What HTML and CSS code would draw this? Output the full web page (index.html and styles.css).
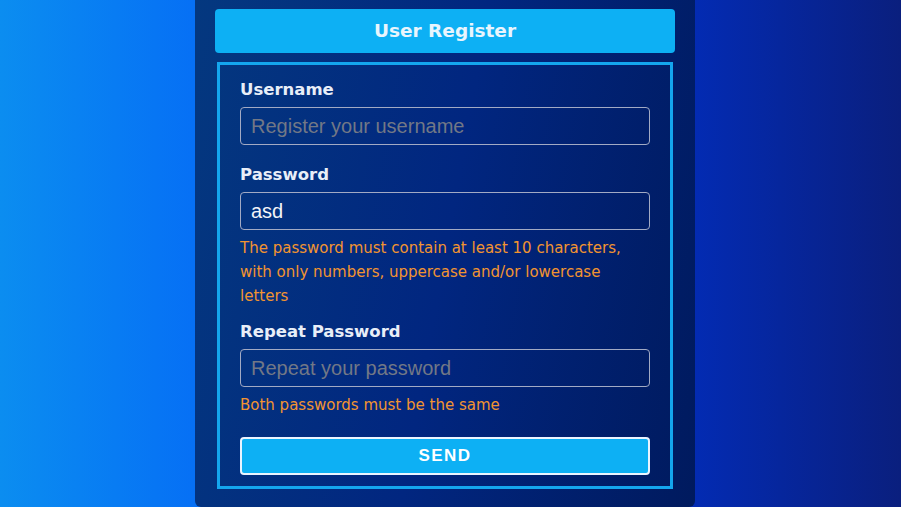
FILE: index.html
```html
<!DOCTYPE html>
<html>
<head>
<meta charset="utf-8">
<link rel="stylesheet" href="styles.css">
</head>
<body>
<main class="card">
  <h1 class="title">User Register</h1>
  <form class="form">
    <div class="field">
      <label class="label">Username</label>
      <input class="input" type="text" placeholder="Register your username">
    </div>
    <div class="field">
      <label class="label">Password</label>
      <input class="input" type="text" value="asd">
      <p class="error">The password must contain at least 10 characters, with only numbers, uppercase and/or lowercase letters</p>
    </div>
    <div class="field">
      <label class="label">Repeat Password</label>
      <input class="input" type="text" placeholder="Repeat your password">
      <p class="error">Both passwords must be the same</p>
    </div>
    <button class="send" type="button">SEND</button>
  </form>
</main>
</body>
</html>
```

FILE: styles.css
```css
html, body {
  margin: 0;
  height: 100%;
}
body {
  background: linear-gradient(to right, #0b8df0 0%, #0670f5 21.6%, #0436c2 72%, #032bb3 77%, #0a1f7e 100%);
  display: flex;
  justify-content: center;
  padding-right: 11px;
  box-sizing: border-box;
  overflow: hidden;
  font-family: "DejaVu Sans", sans-serif;
}
.card {
  width: 460px;
  height: 498px;
  padding: 9px 20px 0;
  background: linear-gradient(100deg, #04387f 0%, #012680 50%, #001a5e 100%);
  border-radius: 0 0 6px 6px;
}
.title {
  margin: 0;
  height: 44px;
  line-height: 44px;
  background: #0db0f4;
  border-radius: 4px;
  color: #e9f5fd;
  text-align: center;
  font-size: 18.5px;
  font-weight: bold;
}
.form {
  margin: 9px 2px 0;
  border: 3px solid #14a6ee;
  padding: 15px 20px 11px;
  display: flex;
  flex-direction: column;
}
.field {
  display: flex;
  flex-direction: column;
}
.label {
  color: #e8eef8;
  font-size: 16.5px;
  font-weight: bold;
  line-height: 20px;
  margin-bottom: 7px;
}
.input {
  box-sizing: border-box;
  height: 38px;
  margin: 0 0 20px;
  padding: 0 10px;
  background: transparent;
  border: 1px solid #a2aac4;
  border-radius: 4px;
  color: #f2f4f8;
  font-family: "Liberation Sans", Arial, sans-serif;
  font-size: 20px;
  outline: none;
}
.input::placeholder {
  color: #727886;
}
.error {
  margin: -14px 0 14px;
  color: #f29430;
  font-size: 15px;
  line-height: 24px;
}
.send {
  margin-top: 6px;
  height: 38px;
  background: #0db0f4;
  border: 2px solid #eaf4ff;
  border-radius: 4px;
  color: #ffffff;
  font-family: "Liberation Sans", Arial, sans-serif;
  font-weight: bold;
  font-size: 17px;
  letter-spacing: 1.5px;
}
```
